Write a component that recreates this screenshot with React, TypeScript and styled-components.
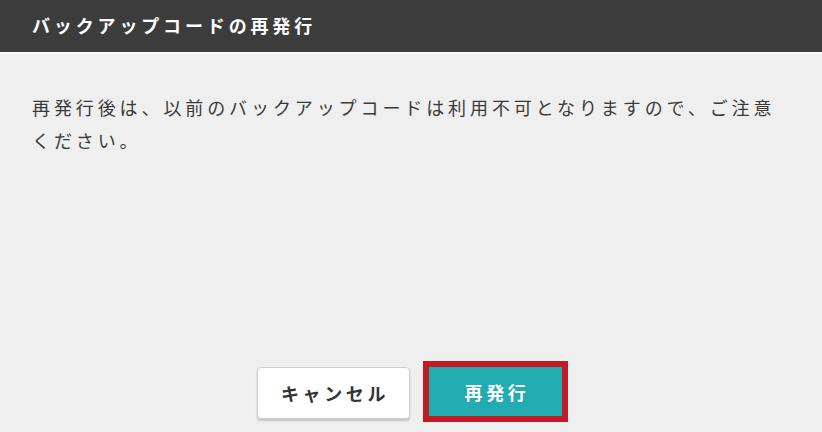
import React from "react";
import styled, { createGlobalStyle } from "styled-components";

const Global = createGlobalStyle`
  html, body { margin: 0; padding: 0; background: #efefef; }
  body { font-family: "Noto Sans CJK JP", "Noto Sans", sans-serif; }
  * { box-sizing: border-box; }
`;

const Dialog = styled.div`
  width: 822px;
  height: 432px;
  display: flex;
  flex-direction: column;
  background: #efefef;
`;

const Header = styled.header`
  height: 54px;
  background: #3c3c3c;
  border-bottom: 2px solid #fafafa;
  display: flex;
  align-items: center;
  padding: 0 32px 2px;
`;

const Title = styled.h1`
  margin: 0;
  color: #ffffff;
  font-size: 18px;
  font-weight: 700;
  letter-spacing: 3.85px;
  line-height: 1;
`;

const Body = styled.div`
  flex: 1;
  padding: 37px 32px 0;
`;

const Message = styled.p`
  margin: 0;
  color: #3a3a3a;
  font-size: 18px;
  line-height: 33px;
  letter-spacing: 3.9px;
`;

const Footer = styled.div`
  display: flex;
  justify-content: center;
  align-items: center;
  gap: 19px;
  padding: 0 3px 13px 0;
`;

const Button = styled.button<{ $primary?: boolean }>`
  font-family: inherit;
  font-size: 18px;
  font-weight: 700;
  letter-spacing: 3.6px;
  cursor: pointer;
  border-radius: ${(p) => (p.$primary ? "0" : "4px")};
  width: ${(p) => (p.$primary ? "133px" : "153px")};
  height: ${(p) => (p.$primary ? "49px" : "52px")};
  color: ${(p) => (p.$primary ? "#ffffff" : "#333333")};
  background: ${(p) => (p.$primary ? "#22acb2" : "#ffffff")};
  border: ${(p) => (p.$primary ? "none" : "1px solid #cfcfcf")};
  box-shadow: ${(p) => (p.$primary ? "none" : "0 2px 2px rgba(0,0,0,0.18)")};
  outline: ${(p) => (p.$primary ? "6px solid #bf1d24" : "none")};
  margin-top: ${(p) => (p.$primary ? "-3px" : "0")};
  padding: 0 0 0 3px;
`;

export default function App() {
  return (
    <>
      <Global />
      <Dialog>
        <Header>
          <Title>バックアップコードの再発行</Title>
        </Header>
        <Body>
          <Message>
            再発行後は、以前のバックアップコードは利用不可となりますので、ご注意ください。
          </Message>
        </Body>
        <Footer>
          <Button>キャンセル</Button>
          <Button $primary>再発行</Button>
        </Footer>
      </Dialog>
    </>
  );
}
